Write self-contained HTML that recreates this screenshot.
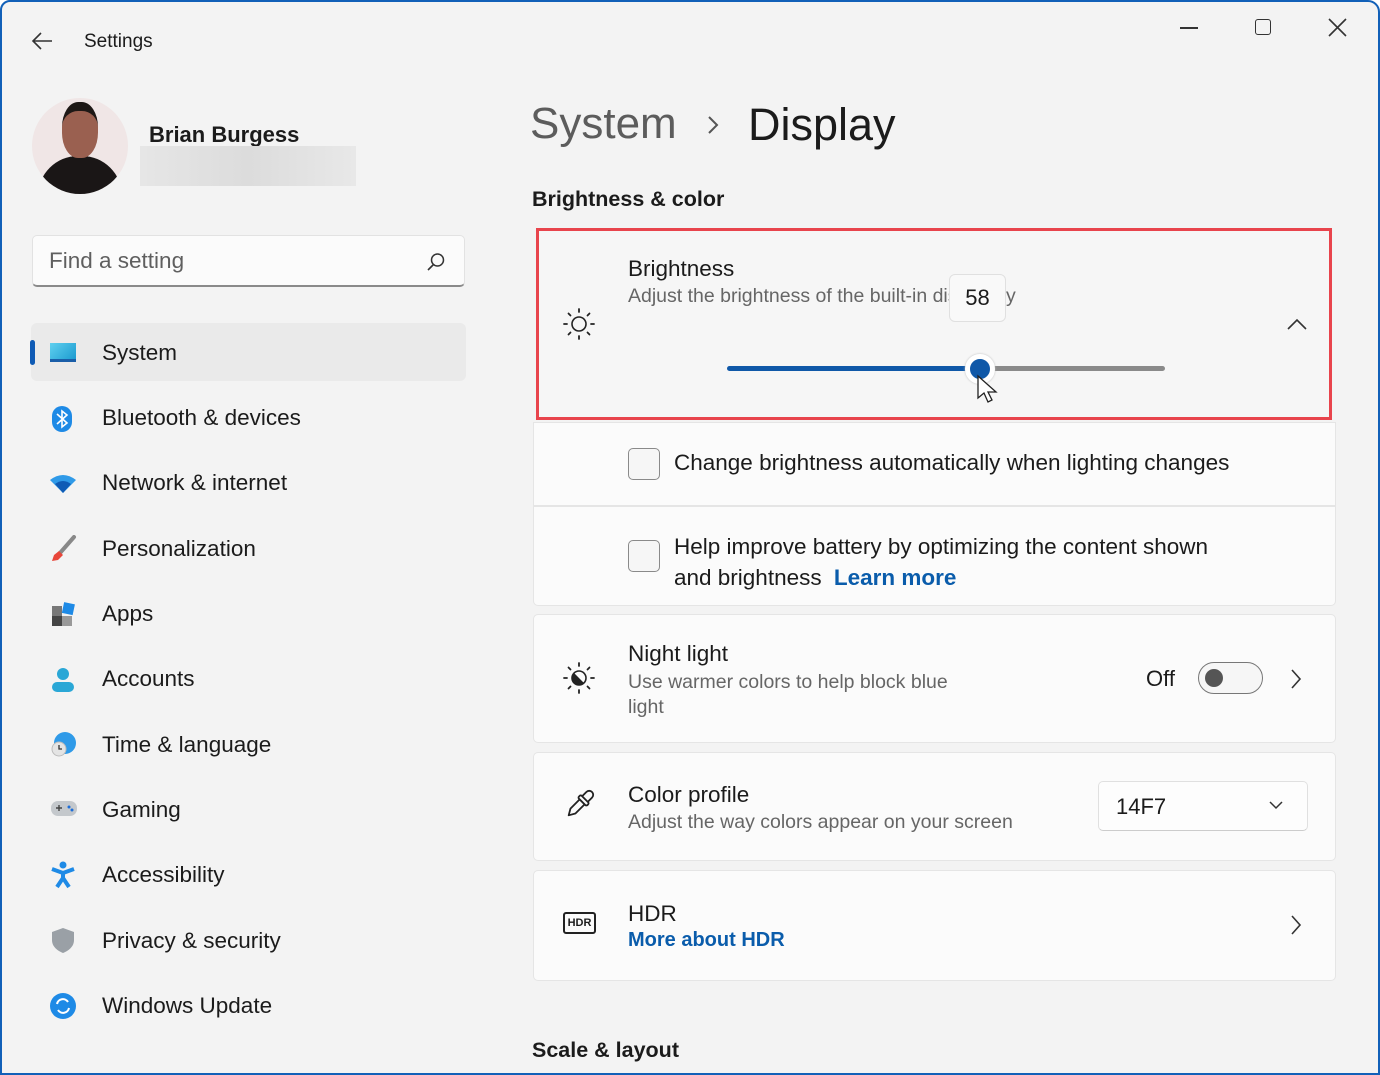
<!DOCTYPE html>
<html><head><meta charset="utf-8"><style>
*{margin:0;padding:0;box-sizing:border-box}
html,body{width:1380px;height:1075px;overflow:hidden;background:#fff}
body{font-family:"Liberation Sans",sans-serif;color:#1b1b1b}
.win{position:absolute;left:0;top:0;width:1380px;height:1075px;background:#f3f3f3;border-radius:10px 12px 0 0;overflow:hidden}
.frame{position:absolute;left:0;top:0;width:1380px;height:1075px;border:2px solid #1160b8;border-radius:10px 12px 0 0;pointer-events:none}
.a{position:absolute;white-space:nowrap}
.nav{position:absolute;left:102px;font-size:22.5px;color:#1b1b1b}
.ic{position:absolute;left:50px}
.card{position:absolute;left:533px;width:803px;background:#fbfbfb;border:1px solid #e5e5e5;border-radius:5px}
.t{font-size:22.5px;color:#1b1b1b}
.s{font-size:19.5px;color:#666}
.cb{position:absolute;left:628px;width:32px;height:32px;border:1.5px solid #8a8a8a;border-radius:5px;background:#f6f6f6}
</style></head><body><div class="win">
<svg class="a" style="left:30px;top:30px" width="24" height="22"><path d="M22 11H3M11 3L3 11l8 8" stroke="#333" stroke-width="1.6" fill="none"/></svg>
<div class="a" style="left:84px;top:31px;font-size:19px">Settings</div>
<div class="a" style="left:1180px;top:27px;width:18px;height:1.5px;background:#333"></div>
<div class="a" style="left:1255px;top:19px;width:16px;height:16px;border:1.6px solid #333;border-radius:3px"></div>
<svg class="a" style="left:1328px;top:18px" width="19" height="19"><path d="M1 1l17 17M18 1L1 18" stroke="#333" stroke-width="1.6"/></svg>
<div class="a" style="left:32px;top:98px;width:96px;height:96px;border-radius:50%;background:#f0e6e6;overflow:hidden"><div style="position:absolute;left:6px;top:58px;width:84px;height:50px;border-radius:40px 40px 0 0;background:#1a1616"></div><div style="position:absolute;left:30px;top:4px;width:36px;height:56px;border-radius:45%;background:#9a6050;border-top:9px solid #1e1816"></div></div>
<div class="a" style="left:149px;top:122px;font-size:22px;font-weight:bold;color:#1b1b1b">Brian Burgess</div>
<div class="a" style="left:140px;top:146px;width:216px;height:40px;background:linear-gradient(90deg,#e6e6e6,#dcdcdc,#e8e8e8)"></div>
<div class="a" style="left:32px;top:235px;width:433px;height:52px;background:#fbfbfb;border:1px solid #e2e2e2;border-bottom:2px solid #8a8a8a;border-radius:5px"></div>
<div class="a" style="left:49px;top:248px;font-size:22.5px;color:#5f5f5f">Find a setting</div>
<svg class="a" style="left:426px;top:252px" width="20" height="20"><circle cx="11.5" cy="8" r="6" stroke="#333" stroke-width="1.5" fill="none"/><path d="M7.5 12.5L2 18" stroke="#333" stroke-width="1.6"/></svg>
<div class="a" style="left:31px;top:323px;width:435px;height:58px;background:#eaeaea;border-radius:6px"></div>
<div class="a" style="left:30px;top:340px;width:5px;height:25px;background:#0f5bb5;border-radius:3px"></div>
<div class="a" style="left:50px;top:343px;width:26px;height:19px;background:linear-gradient(135deg,#5fd0ef,#1d9bd0);border-bottom:3px solid #1a5ea8"></div>
<div class="nav" style="top:340px">System</div>
<svg class="ic" style="top:405px" width="26" height="28"><rect x="2" y="1" width="20" height="26" rx="10" fill="#1e8ae6"/><path d="M7 9l10 9-5 4V6l5 4-10 9" stroke="#fff" stroke-width="1.6" fill="none"/></svg>
<div class="nav" style="top:405px">Bluetooth &amp; devices</div>
<svg class="ic" style="top:474px" width="28" height="20"><path d="M0 6Q13-4 26 6L13 19Z" fill="#2f9ae8"/><path d="M5 10Q13 4 21 10L13 19Z" fill="#0f5bb5"/></svg>
<div class="nav" style="top:470px">Network &amp; internet</div>
<svg class="ic" style="top:535px" width="28" height="28"><path d="M24 2L10 18" stroke="#888" stroke-width="4" stroke-linecap="round"/><path d="M9 16l4 4-5 5-6 1 2-6z" fill="#e8463a"/></svg>
<div class="nav" style="top:536px">Personalization</div>
<svg class="ic" style="top:602px" width="28" height="26"><rect x="2" y="4" width="10" height="10" fill="#777"/><rect x="2" y="14" width="10" height="10" fill="#444"/><rect x="12" y="14" width="10" height="10" fill="#999"/><rect x="13" y="1" width="11" height="11" fill="#1e8ae6" transform="rotate(12 18 6)"/></svg>
<div class="nav" style="top:601px">Apps</div>
<svg class="ic" style="top:666px" width="26" height="28"><circle cx="13" cy="8" r="6" fill="#2aa7d6"/><rect x="2" y="16" width="22" height="10" rx="5" fill="#2aa7d6"/></svg>
<div class="nav" style="top:666px">Accounts</div>
<svg class="ic" style="top:731px" width="28" height="28"><circle cx="15" cy="12" r="11" fill="#2f9ae8"/><circle cx="9" cy="18" r="7" fill="#e4e4e4" stroke="#bbb"/><path d="M9 14v4h3" stroke="#333" stroke-width="1.3" fill="none"/></svg>
<div class="nav" style="top:732px">Time &amp; language</div>
<svg class="ic" style="top:799px" width="28" height="20"><rect x="1" y="2" width="26" height="15" rx="7" fill="#c4c8cc"/><path d="M6 9h6M9 6v6" stroke="#444" stroke-width="1.4"/><circle cx="19" cy="8" r="1.5" fill="#1e6ed8"/><circle cx="22" cy="11" r="1.5" fill="#1e6ed8"/></svg>
<div class="nav" style="top:797px">Gaming</div>
<svg class="ic" style="top:861px" width="26" height="28"><circle cx="13" cy="4" r="3.5" fill="#1e8ae6"/><path d="M2 8l11 4 11-4M13 12v5l-6 9M13 17l6 9" stroke="#1e8ae6" stroke-width="4" fill="none" stroke-linejoin="round"/></svg>
<div class="nav" style="top:862px">Accessibility</div>
<svg class="ic" style="top:927px" width="26" height="28"><path d="M13 1L24 5v8c0 7-6 11-11 13C8 24 2 20 2 13V5z" fill="#9aa0a6"/></svg>
<div class="nav" style="top:928px">Privacy &amp; security</div>
<svg class="ic" style="top:992px" width="28" height="28"><circle cx="13" cy="14" r="13" fill="#1e8ae6"/><path d="M7 12a6 6 0 0 1 11-2M19 16a6 6 0 0 1-11 2" stroke="#fff" stroke-width="2" fill="none"/></svg>
<div class="nav" style="top:993px">Windows Update</div>
<div class="a" style="left:530px;top:99px;font-size:44px;color:#5c5c5c">System</div>
<svg class="a" style="left:706px;top:114px" width="14" height="22"><path d="M3 3l8 8-8 8" stroke="#555" stroke-width="2" fill="none"/></svg>
<div class="a" style="left:748px;top:99px;font-size:45px;color:#1b1b1b">Display</div>
<div class="a" style="left:532px;top:187px;font-size:21.5px;font-weight:bold">Brightness &amp; color</div>
<div class="card" style="top:228px;height:192px;left:536px;width:796px;background:#f6f6f6;border:3px solid #e8444c;border-radius:0"></div>
<svg class="a" style="left:562px;top:307px" width="34" height="34"><circle cx="17" cy="17" r="7" stroke="#222" stroke-width="1.6" fill="none"/><g stroke="#222" stroke-width="1.8" stroke-linecap="round"><path d="M17 2v3M17 29v3M2 17h3M29 17h3M6.5 6.5l2 2M25.5 25.5l2 2M6.5 27.5l2-2M25.5 8.5l2-2"/></g></svg>
<div class="a t" style="left:628px;top:256px">Brightness</div>
<div class="a s" style="left:628px;top:285px">Adjust the brightness of the built-in display</div>
<div class="a" style="left:949px;top:274px;width:57px;height:48px;background:#f9f9f9;border:1px solid #e0e0e0;border-radius:6px;font-size:22px;text-align:center;line-height:46px">58</div>
<div class="a s" style="left:1006px;top:285px;color:#666">y</div>
<svg class="a" style="left:1286px;top:317px" width="22" height="14"><path d="M2 12l9-9 9 9" stroke="#333" stroke-width="1.6" fill="none"/></svg>
<div class="a" style="left:727px;top:366px;width:253px;height:5px;background:#0f58a8;border-radius:3px"></div>
<div class="a" style="left:980px;top:366px;width:185px;height:5px;background:#8a8a8a;border-radius:3px"></div>
<div class="a" style="left:965px;top:354px;width:30px;height:30px;border-radius:50%;background:#0f58a8;border:5px solid #fff;box-shadow:0 0 2px #bbb"></div>
<svg class="a" style="left:976px;top:374px" width="22" height="32"><path d="M2 2v22l6-5 4 9 4-2-4-8h8z" fill="#fff" stroke="#222" stroke-width="1.3"/></svg>
<div class="card" style="top:422px;height:84px;border-radius:0"></div>
<div class="cb" style="top:448px"></div>
<div class="a t" style="left:674px;top:450px">Change brightness automatically when lighting changes</div>
<div class="card" style="top:506px;height:100px;border-radius:0 0 5px 5px"></div>
<div class="cb" style="top:540px"></div>
<div class="a t" style="left:674px;top:534px">Help improve battery by optimizing the content shown</div>
<div class="a t" style="left:674px;top:565px">and brightness <span style="color:#0a5cab;font-weight:bold;margin-left:6px">Learn more</span></div>
<div class="card" style="top:614px;height:129px"></div>
<svg class="a" style="left:562px;top:661px" width="34" height="34"><circle cx="17" cy="17" r="7" stroke="#222" stroke-width="1.6" fill="none"/><path d="M17 10a7 7 0 0 0 0 14z" fill="#222" transform="rotate(-45 17 17)"/><g stroke="#222" stroke-width="1.8" stroke-linecap="round"><path d="M17 2v3M17 29v3M2 17h3M29 17h3M6.5 6.5l2 2M25.5 25.5l2 2M6.5 27.5l2-2M25.5 8.5l2-2"/></g></svg>
<div class="a t" style="left:628px;top:641px">Night light</div>
<div class="a s" style="left:628px;top:671px">Use warmer colors to help block blue</div>
<div class="a s" style="left:628px;top:696px">light</div>
<div class="a" style="left:1146px;top:666px;font-size:22px">Off</div>
<div class="a" style="left:1198px;top:662px;width:65px;height:32px;border:1.5px solid #777;border-radius:16px;background:#f6f6f6"></div>
<div class="a" style="left:1205px;top:669px;width:18px;height:18px;border-radius:50%;background:#555"></div>
<svg class="a" style="left:1289px;top:668px" width="14" height="22"><path d="M3 2l8 9-8 9" stroke="#333" stroke-width="1.6" fill="none"/></svg>
<div class="card" style="top:752px;height:109px"></div>
<svg class="a" style="left:560px;top:786px" width="38" height="38"><g transform="translate(20 18) rotate(45)" stroke="#222" stroke-width="1.8" fill="none" stroke-linejoin="round"><path d="M-4 -7v-6a4 4 0 0 1 8 0v6"/><rect x="-6" y="-7" width="12" height="4" rx="1.5"/><path d="M-3.5 -3v13l3.5 6 3.5-6v-13"/></g></svg>
<div class="a t" style="left:628px;top:782px">Color profile</div>
<div class="a s" style="left:628px;top:811px">Adjust the way colors appear on your screen</div>
<div class="a" style="left:1098px;top:781px;width:210px;height:50px;background:#fdfdfd;border:1px solid #e0e0e0;border-bottom-color:#ccc;border-radius:5px"></div>
<div class="a" style="left:1116px;top:794px;font-size:22px">14F7</div>
<svg class="a" style="left:1268px;top:800px" width="16" height="10"><path d="M2 2l6 6 6-6" stroke="#333" stroke-width="1.5" fill="none"/></svg>
<div class="card" style="top:870px;height:111px"></div>
<div class="a" style="left:563px;top:912px;width:33px;height:22px;border:2px solid #222;border-radius:3px;font-size:11px;font-weight:bold;text-align:center;line-height:18px">HDR</div>
<div class="a t" style="left:628px;top:901px">HDR</div>
<div class="a" style="left:628px;top:929px;font-size:20px;font-weight:bold;color:#0a5cab">More about HDR</div>
<svg class="a" style="left:1289px;top:914px" width="14" height="22"><path d="M3 2l8 9-8 9" stroke="#333" stroke-width="1.6" fill="none"/></svg>
<div class="a" style="left:532px;top:1038px;font-size:21.5px;font-weight:bold">Scale &amp; layout</div>
</div><div class="frame"></div></body></html>
